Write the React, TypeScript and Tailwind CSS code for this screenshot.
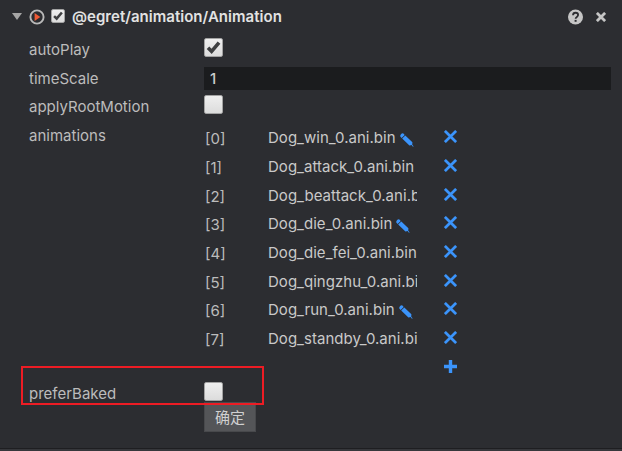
import React from "react";

function Check({ checked = false, small = false }: { checked?: boolean; small?: boolean }) {
  return (
    <span
      className={`flex shrink-0 items-center justify-center rounded-[2px] border border-[#a3a3a3] bg-gradient-to-b from-[#efefef] to-[#dcdcdc] ${small ? "size-[14px]" : "size-[19px]"}`}
    >
      {checked && (
        <svg viewBox="0 0 17 17" className="size-full" fill="none" stroke="#3e3f41" strokeWidth="3.6">
          <path d="M3 8.8 L6.6 12.3 L14 3.6" />
        </svg>
      )}
    </span>
  );
}

function Pencil() {
  return (
    <svg viewBox="0 0 14 14" className="mt-[4px] ml-[4px] size-[14px] shrink-0" fill="#3b94fb">
      <path d="M.3 3.4Q0 2.4.8 1.4L1.4.8Q2.4 0 3.4.6L4.7 1.9 1.6 5ZM2.2 5.6 5.3 2.5 12.4 9.2 12.2 12 9.4 12.4ZM12.5 11.8 13.8 13.8 11.8 13Z" />
    </svg>
  );
}

function Label({ children }: { children: string }) {
  return <span className="w-[175px] shrink-0">{children}</span>;
}

const clips = [
  { name: "Dog_win_0.ani.bin", edit: true },
  { name: "Dog_attack_0.ani.bin" },
  { name: "Dog_beattack_0.ani.bin" },
  { name: "Dog_die_0.ani.bin", edit: true },
  { name: "Dog_die_fei_0.ani.bin" },
  { name: "Dog_qingzhu_0.ani.bin" },
  { name: "Dog_run_0.ani.bin", edit: true },
  { name: "Dog_standby_0.ani.bin" },
];

export default function App() {
  return (
    <div className="relative flex h-[451px] w-[622px] flex-col overflow-hidden bg-[#2c2d31] font-['Inter','Noto_Sans_CJK_SC',sans-serif] text-[15px] leading-[20px] text-[#bcbcbc]">
      <header className="flex h-[33px] shrink-0 items-center pl-[12px]">
        <svg viewBox="0 0 10 7" className="h-[7px] w-[10px]" fill="#a5a5a5">
          <path d="M0 0H10L5 7Z" />
        </svg>
        <svg viewBox="0 0 16 16" className="ml-[7px] size-[16px]">
          <circle cx="8" cy="8" r="6.6" fill="none" stroke="#b9b9b9" strokeWidth="1.9" />
          <path d="M5.6 4V12L11.3 8Z" fill="#f05a35" />
        </svg>
        <span className="ml-[6px] -mt-px">
          <Check small checked />
        </span>
        <span className="ml-[7px] text-[15px] font-semibold tracking-[0.03px] text-[#e2e2e2]">@egret/animation/Animation</span>
        <svg viewBox="0 0 16 16" className="mr-[20px] ml-auto size-[16px] shrink-0">
          <circle cx="7.5" cy="8" r="7.5" fill="#c5c5c5" />
          <path d="M5 6.2C5 2.9 10.1 3 10.1 6.1C10.1 8 7.6 7.8 7.6 9.7" fill="none" stroke="#2c2d31" strokeWidth="1.8" />
          <path d="M6.6 10.9H8.6V12.8H6.6Z" fill="#2c2d31" />
        </svg>
        <svg viewBox="0 0 10 10" className="-ml-[8px] mr-[16px] size-[10px] shrink-0" stroke="#c5c5c5" strokeWidth="2.8">
          <path d="M.9.9 9.1 9.1M9.1.9.9 9.1" />
        </svg>
      </header>

      <main className="flex flex-col pl-[29px]">
        <div className="mt-[2px] flex h-[29px] items-center">
          <Label>autoPlay</Label>
          <span className="-mt-[4px]"><Check checked /></span>
        </div>
        <div className="flex h-[29px] items-center">
          <Label>timeScale</Label>
          <div className="h-[23px] w-[407px] bg-[#1b1c1e] pl-[6px] leading-[23px] font-medium text-[#cccccc]">1</div>
        </div>
        <div className="flex h-[28px] items-center">
          <Label>applyRootMotion</Label>
          <span className="-mt-[6px]"><Check /></span>
        </div>
        <div className="flex h-[260px] items-start">
          <span className="w-[175px] shrink-0 pt-[5px]">animations</span>
          <div className="mt-[3px] flex flex-col">
            {clips.map((clip, i) => (
              <div key={clip.name} className="flex h-[28.7px] items-center">
                <span className="w-[64px] shrink-0 pt-[2px] pl-[1px]">{`[${i}]`}</span>
                <div className="flex w-[149px] shrink-0 items-center overflow-hidden tracking-[0.03px] text-[#c9c9c9]">
                  <span className="whitespace-nowrap">{clip.name}</span>
                  {clip.edit && <Pencil />}
                </div>
                <svg viewBox="0 0 13 13" className="-mt-[3px] ml-[27px] size-[13px] shrink-0" stroke="#3b94fb" strokeWidth="2.7">
                  <path d="M.9.9 12.1 12.1M12.1.9.9 12.1" />
                </svg>
              </div>
            ))}
            <div className="flex h-[26px] items-center justify-end">
              <svg viewBox="0 0 13 13" className="size-[13px]" fill="#3b94fb">
                <path d="M4.8 0H8.2V4.8H13V8.2H8.2V13H4.8V8.2H0V4.8H4.8Z" />
              </svg>
            </div>
          </div>
        </div>
        <div className="flex h-[21px] items-start">
          <span className="w-[175px] shrink-0 pt-[3px]">preferBaked</span>
          <span className="mt-[1px]"><Check /></span>
        </div>
        <button className="ml-[175px] h-[30px] w-[52px] border border-[#48494c] bg-[#545558] pt-px text-[15px] text-[#d0d0d0]">确定</button>
      </main>

      <footer className="mt-auto h-[3px] border-t border-[#1e1e21] bg-[#36373b]" />
      <div className="absolute top-[366px] left-[21px] h-[39px] w-[243px] border-2 border-[#ed1c24]" />
    </div>
  );
}
